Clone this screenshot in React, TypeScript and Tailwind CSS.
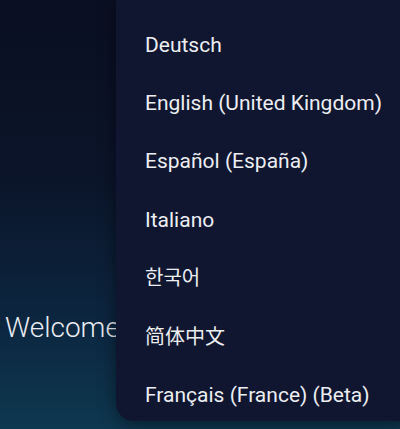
const languages = [
  { label: "Deutsch", cjk: false },
  { label: "English (United Kingdom)", cjk: false },
  { label: "Español (España)", cjk: false },
  { label: "Italiano", cjk: false },
  { label: "한국어", cjk: true },
  { label: "简体中文", cjk: true },
  { label: "Français (France) (Beta)", cjk: false },
];

export default function App() {
  return (
    <div className="relative h-[429px] w-[400px] overflow-hidden bg-[linear-gradient(to_bottom,#0a0f22_0%,#0b1429_40%,#0c2640_75%,#0e3850_100%)] font-['Roboto','Noto_Sans_CJK_KR','Noto_Sans_CJK_SC',sans-serif]">
      <div className="absolute left-[5px] top-[310px] text-[28px] font-light leading-[36px] text-[#e9ecf2]">
        Welcome
      </div>

      <div className="absolute left-[116px] top-0 h-[421px] w-[300px] overflow-hidden rounded-b-[18px] bg-[#10162f] shadow-[0_4px_18px_rgba(0,0,0,0.45)]">
        <ul className="flex flex-col pt-[16px]">
          {languages.map((lang) => (
            <li
              key={lang.label}
              className={
                lang.cjk
                  ? "flex h-[58.33px] items-center pl-[29px] text-[20px] leading-none text-[#eceef3]"
                  : "flex h-[58.33px] items-center pl-[29px] text-[21px] leading-none text-[#eceef3]"
              }
            >
              {lang.label}
            </li>
          ))}
        </ul>
      </div>
    </div>
  );
}
